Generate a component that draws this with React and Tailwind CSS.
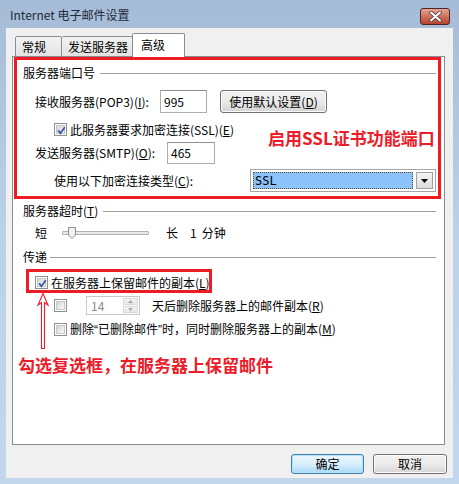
import React from 'react';

const ui = "font-['Noto_Sans_CJK_SC','Liberation_Sans',sans-serif] text-[12px] text-black";

function Checkbox({ checked }) {
  return (
    <span className="w-[13px] h-[13px] shrink-0 border border-[#8e8f8f] bg-white p-px flex">
      <span className="relative flex-1 border border-[#c4c7cc] bg-linear-to-br from-[#d3d6db] to-[#f8f8f8]">
        {checked && (
          <svg className="absolute -left-[2px] -top-[2px]" width="13" height="13" viewBox="0 0 13 13">
            <path d="M3.2 6.4 L5.4 9.2 L9.8 3.2" fill="none" stroke="#3b5aa8" strokeWidth="1.8" />
          </svg>
        )}
      </span>
    </span>
  );
}

function Key({ k }) {
  return (
    <>
      (<u className="underline-offset-1">{k}</u>)
    </>
  );
}

function GroupHeader({ label, gap }) {
  return (
    <div className="h-[16px] flex items-center pl-[10px] pr-[8px]">
      <span className="leading-[16px] whitespace-nowrap">{label}</span>
      <span className={`flex-1 h-px bg-[#a0a0a0] ${gap}`} />
    </div>
  );
}

function TextBox({ value, width }) {
  return (
    <div className={`${width} h-full border border-[#abadb3] border-t-[#8e9199] bg-white pl-[3px] flex items-center`}>
      {value}
    </div>
  );
}

function WinButton({ children, width, primary }) {
  return (
    <div
      className={`${width} h-full rounded-[3px] border flex items-center justify-center ${
        primary
          ? 'border-[#3c7fb1] bg-linear-to-b from-[#eaf6fd] via-[#d9f0fc] to-[#a7d9f5] shadow-[inset_0_0_0_1px_#b8e1f8]'
          : 'border-[#707070] bg-linear-to-b from-[#f2f2f2] via-[#ebebeb] to-[#d4d4d4] shadow-[inset_0_0_0_1px_#fbfbfb]'
      }`}
    >
      {children}
    </div>
  );
}

const Q = ({ c }) => <span className="font-['Liberation_Sans',sans-serif]">{c}</span>;

export default function App() {
  return (
    <div className={`${ui} w-[459px] h-[484px] bg-linear-to-b from-[#a6bcd6] via-[#bcd2ea] to-[#c2d6ec] flex flex-col overflow-hidden`}>
      {/* TITLE BAR */}
      <div className="h-[28px] flex items-start shrink-0">
        <span className="pl-[10px] pt-[6px] leading-[18px] text-[12px] text-[#1e2a3a]">Internet 电子邮件设置</span>
        <div className="ml-auto mt-[8px] mr-[9px] w-[30px] h-[17px] rounded-[3px] border border-[#502424] bg-linear-to-b from-[#e4a592] via-[#d0705c] to-[#b8432c] flex items-center justify-center">
          <svg width="13" height="11" viewBox="0 0 13 11">
            <path d="M2 1.5 L11 9.5 M11 1.5 L2 9.5" stroke="#4a3a3a" strokeWidth="3.6" strokeLinecap="round" />
            <path d="M2 1.5 L11 9.5 M11 1.5 L2 9.5" stroke="#ffffff" strokeWidth="2" strokeLinecap="round" />
          </svg>
        </div>
      </div>

      {/* CLIENT AREA */}
      <div className="mx-[6px] h-[450px] bg-[#f0f0f0] flex flex-col">
        {/* TABS */}
        <div className="h-[29px] flex items-end pl-[9px]">
          <div className="w-[47px] h-[21px] border border-[#898c95] rounded-t-[2px] bg-linear-to-b from-[#f3f3f3] to-[#e3e3e3] pl-[6px] pt-[1px] leading-[18px]">常规</div>
          <div className="w-[71px] h-[21px] border border-l-0 border-[#898c95] rounded-t-[2px] bg-linear-to-b from-[#f3f3f3] to-[#e3e3e3] pl-[6px] pt-[1px] leading-[18px]">发送服务器</div>
          <div className="relative z-10 -ml-px w-[53px] h-[24px] border border-b-0 border-[#898c95] rounded-t-[2px] bg-white pl-[8px] pt-[2px] leading-[18px]">高级</div>
        </div>

        {/* PANEL */}
        <div className="relative -mt-px ml-[6px] w-[433px] h-[389px] border border-[#898c95] bg-white flex flex-col">
          <div className="mt-[8px]">
            <GroupHeader label="服务器端口号" gap="ml-[5px]" />
          </div>

          <div className="mt-[9px] h-[23px] flex items-center pl-[22px]">
            <span className="w-[125px] whitespace-nowrap">接收服务器(POP3)<Key k="I" />:</span>
            <TextBox value="995" width="w-[47px]" />
            <div className="ml-[13px] h-full">
              <WinButton width="w-[107px]">使用默认设置<Key k="D" /></WinButton>
            </div>
          </div>

          <div className="mt-[10px] h-[13px] flex items-center pl-[41px]">
            <Checkbox checked />
            <span className="ml-[3px] whitespace-nowrap leading-[13px]">此服务器要求加密连接(SSL)<Key k="E" /></span>
          </div>

          <div className="mt-[6px] h-[22px] flex items-center pl-[22px]">
            <span className="w-[132px] whitespace-nowrap">发送服务器(SMTP)<Key k="O" />:</span>
            <TextBox value="465" width="w-[48px]" />
          </div>

          <div className="mt-[5px] h-[23px] flex items-center pl-[41px]">
            <span className="w-[196px] whitespace-nowrap">使用以下加密连接类型<Key k="C" />:</span>
            <div className="w-[186px] h-full border border-[#a5a5a5] bg-white p-[2px] flex">
              <div className="flex-1 bg-[#8dc3fb] border border-dotted border-[#5a4a2a] pl-px flex items-center font-['DejaVu_Sans_Mono',monospace] text-[12px]">SSL</div>
              <div className="ml-[3px] w-[17px] border border-[#a0a0a0] bg-linear-to-b from-[#f4f4f4] to-[#dcdcdc] flex items-center justify-center">
                <svg width="7" height="4" viewBox="0 0 7 4"><path d="M0 0 H7 L3.5 4 Z" fill="#000" /></svg>
              </div>
            </div>
          </div>

          <div className="mt-[11px]">
            <GroupHeader label={<>服务器超时<Key k="T" /></>} gap="ml-[5px]" />
          </div>

          <div className="mt-[4px] h-[20px] flex items-center pl-[22px]">
            <span>短</span>
            <div className="relative ml-[15px] w-[87px] h-full flex items-center">
              <div className="w-full h-[4px] border border-[#b0b2b5] bg-[#e6e8ea] rounded-[1px]" />
              <svg className="absolute left-[6px] top-[4px]" width="8" height="12" viewBox="0 0 8 12">
                <path d="M0.5 0.5 H7.5 V8 L4 11.5 L0.5 8 Z" fill="#eef0f2" stroke="#8a8d92" />
              </svg>
            </div>
            <span className="ml-[17px]">长</span>
            <span className="ml-[12px]">1</span>
            <span className="ml-[5px]">分钟</span>
          </div>

          <div className="mt-[6px]">
            <GroupHeader label="传递" gap="ml-[3px]" />
          </div>

          <div className="mt-[11px] h-[13px] flex items-center pl-[22px]">
            <Checkbox checked />
            <span className="ml-[3px] whitespace-nowrap leading-[13px]">在服务器上保留邮件的副本<Key k="L" /></span>
          </div>

          <div className="mt-[7px] h-[19px] flex items-center pl-[41px]">
            <Checkbox />
            <div className="ml-[19px] w-[54px] h-full border border-[#c6c8cc] bg-white flex">
              <span className="flex-1 pl-[4px] leading-[17px] text-[#8a8a8a]">14</span>
              <div className="w-[15px] my-px mr-px flex flex-col gap-px">
                <div className="flex-1 border border-[#d6d8da] bg-linear-to-b from-[#f6f6f6] to-[#e6e6e6] flex items-center justify-center">
                  <svg width="5" height="3" viewBox="0 0 5 3"><path d="M0 3 H5 L2.5 0 Z" fill="#a8a8a8" /></svg>
                </div>
                <div className="flex-1 border border-[#d6d8da] bg-linear-to-b from-[#f6f6f6] to-[#e6e6e6] flex items-center justify-center">
                  <svg width="5" height="3" viewBox="0 0 5 3"><path d="M0 0 H5 L2.5 3 Z" fill="#a8a8a8" /></svg>
                </div>
              </div>
            </div>
            <span className="ml-[12px] whitespace-nowrap">天后删除服务器上的邮件副本<Key k="R" /></span>
          </div>

          <div className="mt-[8px] h-[13px] flex items-center pl-[41px]">
            <Checkbox />
            <span className="ml-[3px] whitespace-nowrap leading-[13px]">删除<Q c="“" />已删除邮件<Q c="”" />时，同时删除服务器上的副本<Key k="M" /></span>
          </div>

          {/* ANNOTATIONS */}
          <div className="absolute left-[1px] top-0 w-[427px] h-[142px] border-[3px] border-[#ed1c24]" />
          <div className="absolute left-[13px] top-[212px] w-[186px] h-[24px] border-[3px] border-[#ed1c24]" />
          <div className="absolute left-[255px] top-[71px] text-[17px] leading-[20px] font-bold text-[#ec1c2a] whitespace-nowrap">启用SSL证书功能端口</div>
          <svg className="absolute left-[24px] top-[236px]" width="12" height="56" viewBox="0 0 12 56">
            <path d="M6 0.5 L11 12 L7.5 9.5 L7.5 55.5 L4.5 55.5 L4.5 9.5 L1 12 Z" fill="none" stroke="#ec1c2a" strokeWidth="1.1" />
          </svg>
          <div className="absolute left-[5px] top-[298px] text-[17px] leading-[20px] font-bold text-[#ec1c2a] whitespace-nowrap">勾选复选框，在服务器上保留邮件</div>
        </div>

        {/* BUTTONS */}
        <div className="mt-[9px] h-[20px] flex justify-end gap-[9px] pr-[6px]">
          <WinButton width="w-[73px]" primary>确定</WinButton>
          <WinButton width="w-[74px]">取消</WinButton>
        </div>
      </div>
    </div>
  );
}
